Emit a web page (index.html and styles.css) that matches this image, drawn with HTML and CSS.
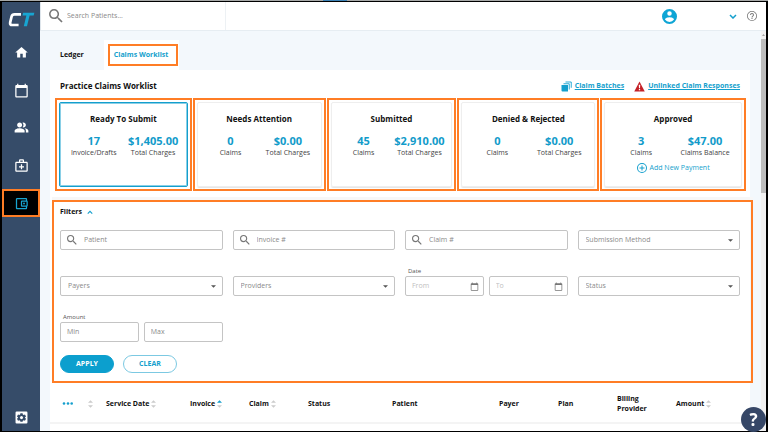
FILE: index.html
```html
<!DOCTYPE html>
<html lang="en">
<head>
<meta charset="utf-8">
<title>Practice Claims Worklist</title>
<link rel="stylesheet" href="styles.css">
</head>
<body>
<svg class="defs" aria-hidden="true">
  <symbol id="search" viewBox="0 0 24 24"><path d="M15.5 14h-.79l-.28-.27A6.47 6.47 0 0 0 16 9.5 6.5 6.5 0 1 0 9.5 16c1.61 0 3.09-.59 4.23-1.57l.27.28v.79l5 4.99L20.49 19l-4.99-5zm-6 0C7.01 14 5 11.99 5 9.5S7.01 5 9.5 5 14 7.01 14 9.5 11.99 14 9.5 14z"/></symbol>
  <symbol id="caret" viewBox="0 0 10 5"><path d="M0 0h10L5 5z"/></symbol>
  <symbol id="calendar" viewBox="0 0 24 24"><path d="M20 3h-1V1h-2v2H7V1H5v2H4c-1.1 0-2 .9-2 2v16c0 1.1.9 2 2 2h16c1.1 0 2-.9 2-2V5c0-1.1-.9-2-2-2zm0 18H4V8h16v13z"/></symbol>
  <symbol id="sort" viewBox="0 0 8 12"><path d="M4 0l4 4H0zM0 8h8l-4 4z"/></symbol>
</svg>
<div class="top-mark"></div>
<div class="app">
  <aside class="sidebar">
    <a class="logo" href="#" aria-label="Home page">
      <svg viewBox="0 0 26 14"><path d="M12.5 2H6.3Q4 2 3.5 4L2.1 9.8Q1.6 12.3 4 12.3h6.2" fill="none" stroke="#fff" stroke-width="2.6"/><path d="M14.6.5h10.8l-.7 2.7H20.800l-2.500 10.400h-3.100l2.500-10.400h-3.800z" fill="#18a5d2"/></svg>
    </a>
    <nav class="nav">
      <a href="#" aria-label="Home"><svg viewBox="0 0 24 24"><path d="M10 20v-6h4v6h5v-8h3L12 3 2 12h3v8z"/></svg></a>
      <a href="#" aria-label="Calendar"><svg viewBox="0 0 24 24"><use href="#calendar"/></svg></a>
      <a href="#" aria-label="Patients"><svg viewBox="0 0 24 24"><path d="M16.670 13.130C18.040 14.060 19 15.320 19 17v3h4v-3c0-2.180-3.570-3.470-6.330-3.870zM15 12c2.210 0 4-1.790 4-4s-1.790-4-4-4c-.47 0-.91.100-1.330.240a5.980 5.980 0 0 1 0 7.520c.42.140.86.240 1.330.240zM9 12c2.210 0 4-1.790 4-4s-1.790-4-4-4-4 1.790-4 4 1.790 4 4 4zm0 1c-2.670 0-8 1.340-8 4v3h16v-3c0-2.660-5.330-4-8-4z"/></svg></a>
      <a href="#" aria-label="Medical"><svg viewBox="0 0 24 24"><path d="M20 6h-4V4c0-1.100-.9-2-2-2h-4c-1.100 0-2 .9-2 2v2H4c-1.100 0-2 .9-2 2v12c0 1.100.9 2 2 2h16c1.100 0 2-.9 2-2V8c0-1.100-.9-2-2-2zM10 4h4v2h-4V4zm10 16H4V8h16v12zM11 10h2v3h3v2h-3v3h-2v-3H8v-2h3z"/></svg></a>
      <a href="#" aria-label="Billing" aria-current="page"><span class="current callout"><svg viewBox="0 0 24 24"><path d="M21 7.280V5c0-1.100-.9-2-2-2H5a2 2 0 0 0-2 2v14c0 1.100.890 2 2 2h14c1.100 0 2-.9 2-2v-2.280A2 2 0 0 0 22 15V9c0-.740-.410-1.380-1-1.720zM20 9v6h-7V9h7zM5 19V5h14v2h-6c-1.100 0-2 .9-2 2v6c0 1.100.9 2 2 2h6v2H5z"/><circle cx="16" cy="12" r="1.500"/></svg></span></a>
    </nav>
    <a class="settings" href="#" aria-label="Settings"><svg viewBox="0 0 24 24"><rect x="1" y="1" width="22" height="22" rx="2" fill="#fff"/><path fill="#364c69" d="M10 4h4l.5 2.400 1.600.9 2.300-.8 2 3.500-1.800 1.500v1.500l1.800 1.500-2 3.500-2.300-.8-1.600.9L14 20h-4l-.5-1.900-1.600-.9-2.300.8-2-3.500L5.400 13v-1.500L3.600 10l2-3.500 2.300.8 1.600-.9z"/><circle cx="12" cy="12.200" r="2.800" fill="#fff"/></svg></a>
  </aside>
  <div class="page">
    <header class="topbar">
      <label class="patient-search"><svg viewBox="3 3 18 18"><use href="#search" width="24" height="24"/></svg><input type="text" placeholder="Search Patients..." aria-label="Search Patients"></label>
      <div class="account">
        <svg class="avatar" viewBox="2 2 20 20"><path d="M12 2a10 10 0 1 0 0 20 10 10 0 0 0 0-20zm0 3a3 3 0 1 1 0 6 3 3 0 0 1 0-6zm0 14.200a7.200 7.200 0 0 1-6-3.220c.030-1.990 4-3.080 6-3.080s5.970 1.090 6 3.080a7.200 7.200 0 0 1-6 3.220z"/></svg>
        <button class="icon-button" aria-label="Account menu"><svg class="chevron" viewBox="0 0 8 5"><path d="M1 1l3 3 3-3"/></svg></button>
        <button class="icon-button" aria-label="Help"><svg class="help-small" viewBox="2 2 20 20"><path d="M11 18h2v-2h-2v2zm1-16a10 10 0 1 0 0 20 10 10 0 0 0 0-20zm0 18.400a8.400 8.400 0 1 1 0-16.800 8.400 8.400 0 0 1 0 16.800zM12 6a4 4 0 0 0-4 4h2a2 2 0 1 1 4 0c0 2-3 1.750-3 5h2c0-2.250 3-2.500 3-5a4 4 0 0 0-4-4z"/></svg></button>
      </div>
    </header>
    <div class="body">
      <main class="content">
        <nav class="tabs">
          <a class="tab" href="#">Ledger</a>
          <a class="tab active" href="#"><span class="callout">Claims Worklist</span></a>
        </nav>
        <section class="panel">
          <div class="panel-head">
            <h1>Practice Claims Worklist</h1>
            <div class="links">
              <a href="#"><svg viewBox="0 0 22 22"><path d="M1 8h13v13H3q-2 0-2-2z"/><path d="M5 5.500h11.500V17M9 2h11.500v11.500" fill="none" stroke="#14a3d2" stroke-width="1.800"/></svg><span>Claim Batches</span></a>
              <a href="#"><svg viewBox="0 0 22 22"><path d="M11 1l10.500 20H.5z" fill="#c42127"/><path d="M9.500 7.500h3l-.5 7h-2zM9.700 16h2.600v2.600H9.700z" fill="#fff"/></svg><span>Unlinked Claim Responses</span></a>
            </div>
          </div>
          <div class="cards">
            <div class="callout"><article class="card selected"><h2>Ready To Submit</h2><dl><div><dd>17</dd><dt>Invoice/Drafts</dt></div><div><dd>$1,405.00</dd><dt>Total Charges</dt></div></dl></article></div>
            <div class="callout"><article class="card"><h2>Needs Attention</h2><dl><div><dd>0</dd><dt>Claims</dt></div><div><dd>$0.00</dd><dt>Total Charges</dt></div></dl></article></div>
            <div class="callout"><article class="card"><h2>Submitted</h2><dl><div><dd>45</dd><dt>Claims</dt></div><div><dd>$2,910.00</dd><dt>Total Charges</dt></div></dl></article></div>
            <div class="callout"><article class="card"><h2>Denied &amp; Rejected</h2><dl><div><dd>0</dd><dt>Claims</dt></div><div><dd>$0.00</dd><dt>Total Charges</dt></div></dl></article></div>
            <div class="callout"><article class="card"><h2>Approved</h2><dl><div><dd>3</dd><dt>Claims</dt></div><div><dd>$47.00</dd><dt>Claims Balance</dt></div></dl>
              <a class="add" href="#"><svg viewBox="2 2 20 20"><path d="M13 7h-2v4H7v2h4v4h2v-4h4v-2h-4V7zm-1-5a10 10 0 1 0 0 20 10 10 0 0 0 0-20zm0 18a8 8 0 1 1 0-16 8 8 0 0 1 0 16z"/></svg>Add New Payment</a></article></div>
          </div>
          <form class="filters callout">
            <button type="button" class="filters-toggle">Filters <svg class="chevron" viewBox="0 0 8 5"><path d="M1 4l3-3 3 3"/></svg></button>
            <div class="fields">
              <label class="field"><svg class="lens" viewBox="3 3 18 18"><use href="#search" width="24" height="24"/></svg><input type="text" placeholder="Patient" aria-label="Patient"></label>
              <label class="field"><svg class="lens" viewBox="3 3 18 18"><use href="#search" width="24" height="24"/></svg><input type="text" placeholder="Invoice #" aria-label="Invoice #"></label>
              <label class="field"><svg class="lens" viewBox="3 3 18 18"><use href="#search" width="24" height="24"/></svg><input type="text" placeholder="Claim #" aria-label="Claim #"></label>
              <div class="field"><select aria-label="Submission Method"><option>Submission Method</option></select><svg class="caret"><use href="#caret"/></svg></div>
              <div class="field"><select aria-label="Payers"><option>Payers</option></select><svg class="caret"><use href="#caret"/></svg></div>
              <div class="field"><select aria-label="Providers"><option>Providers</option></select><svg class="caret"><use href="#caret"/></svg></div>
              <fieldset class="range">
                <legend>Date</legend>
                <label class="field date"><input type="text" placeholder="From" aria-label="Date from"><svg class="cal"><use href="#calendar"/></svg></label>
                <label class="field date"><input type="text" placeholder="To" aria-label="Date to"><svg class="cal"><use href="#calendar"/></svg></label>
              </fieldset>
              <div class="field"><select aria-label="Status"><option>Status</option></select><svg class="caret"><use href="#caret"/></svg></div>
              <fieldset class="range">
                <legend>Amount</legend>
                <label class="field amount"><input type="text" placeholder="Min" aria-label="Minimum amount"></label>
                <label class="field amount"><input type="text" placeholder="Max" aria-label="Maximum amount"></label>
              </fieldset>
            </div>
            <div class="actions"><button type="button" class="pill primary">APPLY</button><button type="button" class="pill">CLEAR</button></div>
          </form>
          <table class="claims">
            <colgroup><col class="c-menu"><col class="c-sort"><col class="c-date"><col class="c-claim"><col class="c-claim"><col class="c-date"><col class="c-patient"><col class="c-claim"><col class="c-claim"><col class="c-claim"><col class="c-amount"></colgroup>
            <thead><tr>
              <th><button type="button" class="icon-button" aria-label="Row actions"><svg class="dots" viewBox="0 0 11 3"><circle cx="2" cy="1.500" r="1.300"/><circle cx="6" cy="1.500" r="1.300"/><circle cx="9.700" cy="1.500" r="1.300"/></svg></button></th>
              <th><svg class="sort"><use href="#sort"/></svg></th>
              <th>Service Date<svg class="sort"><use href="#sort"/></svg></th>
              <th>Invoice<svg class="sort ascending" viewBox="0 0 8 12"><path d="M4 0l4 4H0z"/><path class="down" d="M0 8h8l-4 4z"/></svg></th>
              <th>Claim<svg class="sort"><use href="#sort"/></svg></th>
              <th>Status</th><th>Patient</th><th>Payer</th><th>Plan</th><th class="wrap">Billing Provider</th>
              <th>Amount<svg class="sort"><use href="#sort"/></svg></th>
            </tr></thead>
          </table>
        </section>
      </main>
      <div class="scrollbar" aria-hidden="true"><svg viewBox="0 0 10 5"><path d="M0 5h10L5 0z"/></svg><div class="thumb"></div></div>
    </div>
  </div>
</div>
<button class="help" aria-label="Open help">?</button>
</body>
</html>
```

FILE: styles.css
```css
* { box-sizing: border-box; }
body {
  margin: 0;
  padding-top: 1px;
  background: #a7a9a8;
  color: #111;
  font: 7px/10px "Open Sans", "Noto Sans", sans-serif;
}
h1, h2, dl, dd { margin: 0; font-size: 8px; font-weight: 700; }
a { color: #149fcd; text-decoration: none; }
button, input, select { font: inherit; color: inherit; }
svg { display: block; flex: none; fill: currentColor; }
.defs { position: absolute; width: 0; height: 0; }
.top-mark { position: absolute; top: 0; left: 42%; width: 24px; height: 1px; background: #3d82b5; }

.app {
  display: flex;
  min-height: calc(100vh - 1px);
  border: 2px solid #000;
  border-width: 1px 2px 1px 2px;
}
.callout { border: 2px solid #ff7d25; }

.sidebar {
  display: flex;
  flex-direction: column;
  align-items: stretch;
  width: 38px;
  background: #364c69;
}
.sidebar a { display: flex; align-items: center; justify-content: center; color: #fff; }
.sidebar svg { width: 15px; height: 15px; }
.sidebar .logo { height: 32px; padding-top: 2px; }
.sidebar .logo svg { width: 27px; }
.nav { display: flex; flex-direction: column; height: 188px; }
.nav a { flex: 1; min-height: 0; }
.current { display: flex; align-items: center; justify-content: center; width: 100%; height: 28px; background: #000; color: #18a5d2; }
.sidebar .settings { margin-top: auto; height: 28px; }
.sidebar .settings svg { width: 13px; height: 13px; }

.page { flex: 1; min-width: 0; display: flex; flex-direction: column; background: #f3f8fc; }
.topbar {
  display: flex;
  justify-content: space-between;
  height: 29px;
  background: #fff;
  border-bottom: 1px solid #e6edf2;
  border-left: 1px solid #dfe6ec;
}
.patient-search { display: flex; align-items: center; gap: 4px; width: 185px; padding-left: 8px; border-right: 1px solid #edf1f4; color: #777; }
.patient-search svg { width: 14px; height: 14px; }
input { flex: 1; min-width: 0; width: 100%; padding: 0; border: 0; outline: 0; background: none; }
input::placeholder { color: #8a8a8a; opacity: 1; }
.account { display: flex; align-items: center; padding-right: 9px; }
.avatar { width: 15px; height: 15px; margin-right: 52px; color: #0ea5d5; }
.icon-button { display: block; padding: 0; border: 0; background: none; color: #149fcd; }
.chevron { width: 8px; height: 5px; fill: none; stroke: #149fcd; stroke-width: 1.500; }
.help-small { width: 10px; height: 10px; margin-left: 10px; color: #777; }

.body { flex: 1; display: flex; }
.content { flex: 1; min-width: 0; display: flex; flex-direction: column; padding: 9px 11px 0 10px; }
.scrollbar { width: 5px; background: #f1f1f1; color: #888; }
.scrollbar svg { width: 3px; height: 2px; margin: 3px 1px; }
.thumb { height: 154px; background: #bdbdbd; }

.tabs { display: flex; gap: 10px; height: 30px; }
.tab { display: flex; align-items: center; padding: 0 10px; color: #111; font-weight: 700; }
.tab.active { padding: 0 1px 0 4px; background: #fff; color: #149fcd; }
.tab .callout { padding: 4px 8px 4px 4px; }
.panel { flex: 1; background: #fff; }
.panel-head { display: flex; align-items: center; justify-content: space-between; height: 28px; padding: 4px 10px 0; }
.links { display: flex; gap: 10px; font-weight: 700; }
.links a { display: flex; align-items: center; gap: 3px; }
.links span { text-decoration: underline; }
.links svg { width: 11px; height: 11px; }

.cards {
  display: grid;
  grid-template-columns: 137fr 133fr 130fr 142fr 146fr;
  gap: 1px;
  margin: 0 4px 0 5px;
  padding-bottom: 6px;
}
.cards > .callout { padding: 2px; }
.card { height: 85px; padding: 10px 4px 0; border: 1px solid #eee; border-radius: 2px; box-shadow: 0 1px 1px #e4e4e4; text-align: center; }
.card.selected { border-color: #149fcd; box-shadow: inset 0 0 0 1px #8acfe6; }
.card h2 { line-height: 12px; }
.card dl { display: grid; grid-template-columns: 1fr 1fr; padding-top: 8px; }
.card dl div { min-width: 0; }
.card dd { font-size: 11px; line-height: 15px; color: #129bca; }
.card dt { font-size: 7px; font-weight: 400; color: #444; white-space: nowrap; }
.add { display: flex; align-items: center; justify-content: center; gap: 3px; padding-top: 5px; }
.add svg { width: 10px; height: 10px; }

.filters { margin: 3px -3px 0 2px; padding: 5px 11px 8px 6px; box-shadow: 0 -3px 0 #f7f7f7; }
.filters-toggle { display: flex; align-items: center; gap: 5px; padding: 0; border: 0; background: none; color: #111; font-weight: 700; }
.filters-toggle .chevron { width: 6px; }
.fields { display: grid; grid-template-columns: repeat(4, 1fr); gap: 26px 10px; padding-top: 13px; }
.field { position: relative; display: flex; align-items: center; height: 20px; border: 1px solid #c4c4c4; border-radius: 2px; color: #777; }
.lens { width: 10px; height: 10px; margin: 0 7px 0 6px; }
select { appearance: none; width: 100%; height: 100%; padding: 0 7px; border: 0; outline: 0; background: none; color: #8a8a8a; }
.caret { position: absolute; right: 6px; width: 5px; height: 3px; pointer-events: none; color: #555; }
.range { position: relative; display: grid; grid-template-columns: 1fr 1fr; gap: 5px; min-width: 0; margin: 0; padding: 0; border: 0; }
.range legend { position: absolute; bottom: 100%; left: 3px; padding: 0; color: #555; font-size: 6px; }
.date { padding: 0 4px 0 6px; }
.date input::placeholder { color: #c0c0c0; }
.cal { width: 9px; height: 9px; }
.amount { padding: 0 6px; }
.actions { display: flex; gap: 9px; padding-top: 13px; }
.pill { width: 54px; height: 18px; padding: 0; border: 1px solid #7cc9e2; border-radius: 9px; background: #fff; color: #149fcd; font-weight: 700; }
.pill.primary { border-color: #0c9fce; background: #0c9fce; color: #fff; }

.claims { width: 100%; table-layout: fixed; border-collapse: collapse; }
.claims th { height: 40px; padding: 2px 0 0; border-bottom: 2px solid #f4f4f4; text-align: left; font-weight: 700; }
.claims th:first-child { padding-left: 12px; }
.claims .wrap { padding-right: 16px; }
.c-menu { width: 36px; }
.c-sort { width: 20px; }
.c-date { width: 84px; }
.c-claim { width: 59px; }
.c-patient { width: 107px; }
.c-amount { width: 75px; }
.dots { width: 11px; height: 3px; }
.sort { display: inline-block; width: 5px; height: 8px; margin-left: 2px; vertical-align: middle; color: #ccc; }
.sort.ascending { color: #149fcd; }
.sort .down { fill: #ccc; }

.help { position: fixed; right: 2px; bottom: 0; width: 25px; height: 25px; padding: 0; border: 0; border-radius: 50%; background: #364767; color: #fff; font-size: 17px; line-height: 25px; font-weight: 700; }
```
